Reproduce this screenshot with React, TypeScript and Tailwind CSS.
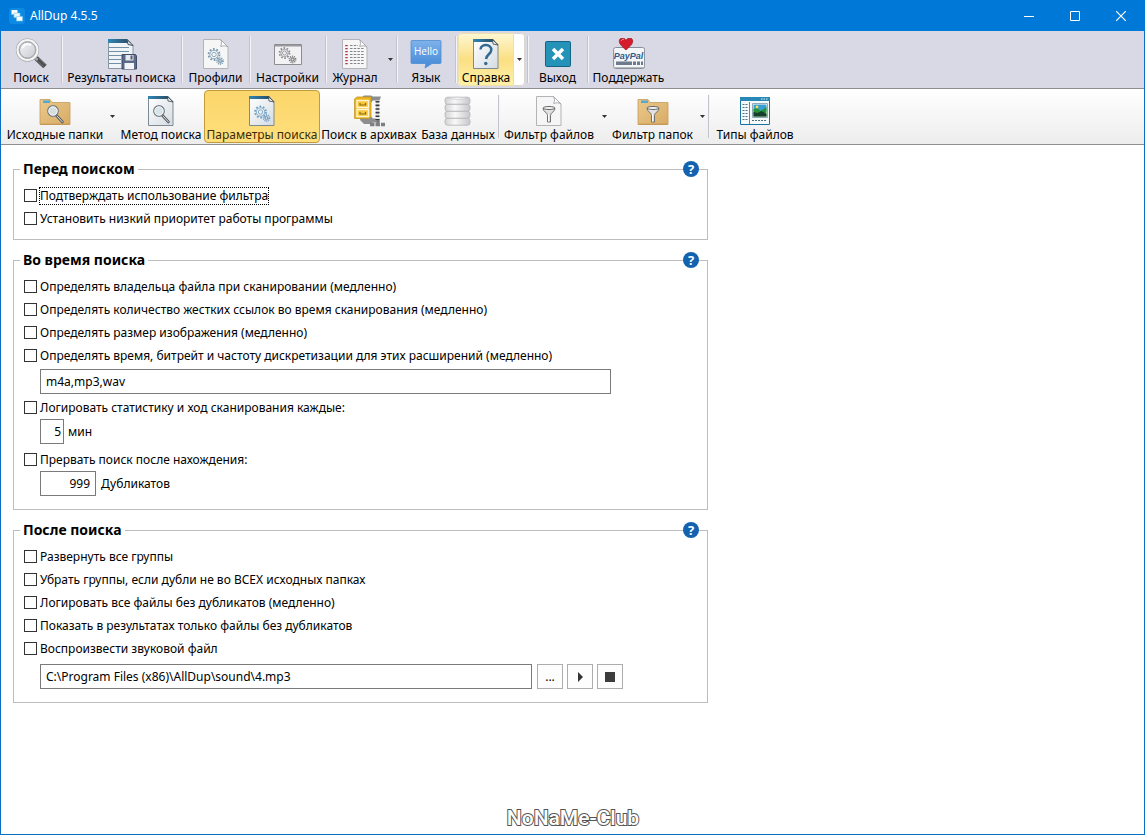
import type { ReactNode } from "react";

function Gear({ cx, cy, r, color }: { cx: number; cy: number; r: number; color: string }) {
  const tooth = (2 * Math.PI * r) / 20;
  return (
    <g fill="none" stroke={color}>
      <circle cx={cx} cy={cy} r={r} strokeWidth="1.800" strokeDasharray={`${tooth} ${tooth}`} />
      <circle cx={cx} cy={cy} r={r - 1.3} strokeWidth="0.8" />
      <circle cx={cx} cy={cy} r={r * 0.4} strokeWidth="0.8" />
    </g>
  );
}

function Svg({ children }: { children: ReactNode }) {
  return <svg viewBox="0 0 32 32" className="h-8 w-8 shrink-0" aria-hidden="true">{children}</svg>;
}

// page with a folded corner, the dark one has a blue header strip
function Page({ dark }: { dark?: boolean }) {
  return dark ? (
    <>
      <path d="M3.5 1.5H23l5 5v24H3.5z" fill="url(#pageFill)" stroke="#7c8a94" />
      <path d="M3 1h20l2 3H3z" fill="url(#stripFill)" />
      <path d="M22.500 1.500l5.500 5.500-5-1z" fill="#e8edf0" stroke="#39444c" strokeWidth="0.8" />
    </>
  ) : (
    <>
      <path d="M3.500 1.500H20.500l7.500 7.500v21.500H3.500z" fill="#f6f6f7" stroke="#b3b3b8" />
      <path d="M20.500 1.500c1.500 2.500 1 5 .2 7 2.500-1 5-1 7.300.5z" fill="#fff" stroke="#a2a2a8" strokeWidth="0.9" />
    </>
  );
}

function Folder() {
  return (
    <>
      <path d="M1 4.500h10l2 3h18v22H1z" fill="url(#folderFill)" stroke="#c69d5c" strokeWidth="0.8" />
      <path d="M4 5.500h7v2.500H4z" fill="#53a9d0" />
      <path d="M1.500 29.200h29" stroke="#c1934e" />
    </>
  );
}

function SmallLens() {
  return (
    <>
      <path d="M17.500 20.500l6 6.500" stroke="#555a60" strokeWidth="2.600" strokeLinecap="round" />
      <path d="M18 21l5.500 6" stroke="#e5e5e5" strokeWidth="1" strokeLinecap="round" />
      <circle cx="14" cy="16" r="5.200" fill="#d4e2e8" fillOpacity="0.9" stroke="#777f86" strokeWidth="1.500" />
      <circle cx="14" cy="16" r="4.200" fill="none" stroke="#f5f8fa" />
    </>
  );
}

function Funnel() {
  return (
    <>
      <path d="M10 13.500c0 3 4.500 4 4.500 7v6.500h3v-6.500c0-3 4.500-4 4.500-7z" fill="#e1e1e1" stroke="#6f6f70" />
      <ellipse cx="16" cy="13" rx="6" ry="1.500" fill="#f5f5f5" stroke="#666" />
      <path d="M15.500 19v7.500" stroke="#fff" />
    </>
  );
}

const icons: Record<string, ReactNode> = {
  search: (
    <>
      <path d="M21 20l9 8.500" stroke="#4a4a4c" strokeWidth="5" />
      <path d="M22 22.500l7 6.800M23.500 20l7 6.800" stroke="#858588" strokeWidth="0.8" />
      <path d="M18.500 18l4 4" stroke="#aaa" strokeWidth="2.500" />
      <circle cx="12.500" cy="12" r="10" fill="#d9dbe0" stroke="#98989d" strokeWidth="3.200" />
      <circle cx="12.500" cy="12" r="10" fill="none" stroke="#f6f6f6" strokeWidth="2.200" />
      <circle cx="12.500" cy="12" r="8" fill="url(#lensFill)" stroke="#a2a2a8" />
      <path d="M7.500 10c1-3.500 5-5 8.500-3" fill="none" stroke="#fff" strokeWidth="1.600" />
    </>
  ),
  results: (
    <>
      <path d="M2.500 1.500H21l6 6v23H2.500z" fill="#f0f4f7" stroke="#8697a3" />
      <path d="M2 1h19l4 4H2z" fill="url(#stripFill)" />
      <path d="M21 1.500l6 6-5-1z" fill="#e6eaed" stroke="#40505c" />
      <path d="M3 9.500h20M3 13.500h20M3 17.500h13M3 21.500h12M3 25.500h12" stroke="#6f90a6" />
      <path d="M16 16.500h13.500l1 1.500v13H16z" fill="#5b6a88" stroke="#404c68" />
      <path d="M19.500 17h8v5.500h-8z" fill="#e5e9f0" />
      <path d="M24.500 17.500h2v4h-2z" fill="#555d76" />
      <path d="M18.500 25h9.500v6h-9.500z" fill="#f3f5f8" />
    </>
  ),
  profiles: (
    <>
      <Page />
      <Gear cx={14} cy={16.5} r={5.500} color="#7898af" />
      <Gear cx={20} cy={23} r={3} color="#7898af" />
    </>
  ),
  settings: (
    <>
      <path d="M2.500 6.500h27v20h-27z" fill="#f2f2f4" stroke="#8c8c91" />
      <path d="M3 7h26v1.500H3z" fill="#9a9a9f" />
      <Gear cx={12.5} cy={15} r={5} color="#8d8d92" />
      <Gear cx={20.5} cy={21.5} r={3} color="#75757a" />
    </>
  ),
  log: (
    <>
      <Page />
      <path d="M11 7.500h8M11 10.500h14M11 13.500h14M11 16.500h14M11 19.500h14M11 22.500h14M11 25.500h14" stroke="#86868a" strokeWidth="1.200" strokeDasharray="2.500 1.200" />
      <path d="M7.500 7v19.500" stroke="#b5384a" strokeWidth="2.500" strokeDasharray="1.300 1.700" />
    </>
  ),
  language: (
    <>
      <path d="M2 2.500h28q1 0 1 1v21q0 1-1 1H22l-7 4.500 1-4.500H2q-1 0-1-1v-21q0-1 1-1z" fill="url(#bubbleFill)" stroke="#4d8dd2" strokeWidth="0.8" />
      <text x="16" y="17" textAnchor="middle" fontFamily="Open Sans, sans-serif" fontSize="10" fill="#fff">Hello</text>
    </>
  ),
  help: (
    <>
      <Page dark />
      <path d="M10.500 11.500c.5-6 11-6 10.800.5-.2 4-4.800 4.500-5.300 9" fill="none" stroke="#326a91" strokeWidth="2.500" />
      <circle cx="15.800" cy="25.500" r="1.700" fill="#326a91" />
    </>
  ),
  exit: (
    <>
      <rect x="3.500" y="3.500" width="25" height="25" rx="1" fill="#2593b8" stroke="#126487" />
      <path d="M11 11l10 10M21 11L11 21" stroke="#fff" strokeWidth="3.500" />
    </>
  ),
  donate: (
    <>
      <rect x="0.600" y="9.500" width="31" height="21" rx="2" fill="#f4f5f7" stroke="#888f99" />
      <text x="15.500" y="21" textAnchor="middle" fontFamily="Liberation Sans, sans-serif" fontSize="9" fontWeight="700" fontStyle="italic" fill="#315b8c">PayPal</text>
      <path d="M3 23.500h16v3.500H3zM20 23.500h3v3.500h-3zM24 23.500h3v3.500h-3zM28 23.500h2v3.500h-2z" fill="#6d7b8d" />
      <path d="M1 29.500h30" stroke="#b5b9c0" />
      <path d="M13 12C9 8.500 6.300 6 6.300 3.300c0-4 5-4.300 6.700-.8 1.700-3.500 6.700-3.200 6.700.8 0 2.700-2.700 5.200-6.700 8.700z" fill="#d61c2b" stroke="#96222b" strokeWidth="0.8" />
      <path d="M8.200 3c.3-1.500 1.500-2 2.700-1.500" fill="none" stroke="#f18c92" />
    </>
  ),
  folderSearch: <><Folder /><SmallLens /></>,
  method: <><Page dark /><SmallLens /></>,
  options: (
    <>
      <Page dark />
      <Gear cx={14.5} cy={17} r={5.500} color="#6f9fc7" />
      <Gear cx={20.5} cy={23} r={3} color="#6f9fc7" />
    </>
  ),
  archive: (
    <>
      <path d="M8 3l3-2.500h7l2 1h8l-1.500 4H20L17.500 8v13l2.500 2.500h6.500v4H20l-2 1.500h-7l-4-4z" fill="#8b8d90" />
      <path d="M24.500 6v19" stroke="#e4e4e4" strokeWidth="3" />
      <path d="M24.500 6v19" stroke="#34373a" strokeWidth="4" strokeDasharray="1.600 2" />
      <path d="M25 25v4" stroke="#777" strokeWidth="3" />
      <path d="M17 29.500h15" stroke="#7d8083" strokeWidth="3.500" strokeDasharray="4.500 1" />
      <path d="M1.500 4l2.500-2H18v19.500l-2 2H1.500z" fill="#eeb51b" stroke="#c2972b" strokeWidth="0.8" />
      <path d="M4 5.500h11.500v7H4zM4 14.500h11.500v7H4z" fill="#f7c63b" stroke="#fff5cf" strokeWidth="1.400" />
      <path d="M7 8v2h5.500V8M7 17v2h5.500v-2" fill="none" stroke="#8b6b1a" strokeWidth="1.200" />
    </>
  ),
  database: (
    <>
      {[23.2, 16.2, 9.2, 2.2].map((y) => (
        <rect key={y} x="3" y={y} width="25" height="7" rx="2.500" fill="url(#diskFill)" stroke="#b3b3b7" strokeWidth="0.8" />
      ))}
      <path d="M5 3.500q11-2.500 21 0-10 2-21 0z" fill="#f6f6f7" stroke="#c2c2c6" strokeWidth="0.600" />
    </>
  ),
  fileFilter: <><Page /><Funnel /></>,
  folderFilter: <><Folder /><Funnel /></>,
  fileTypes: (
    <>
      <path d="M1.500 2.500h29v27h-29z" fill="#f5fafc" stroke="#1774a2" />
      <path d="M1 2h30v4H1z" fill="#2788b6" />
      <path d="M22 4h7" stroke="#d9f1fa" strokeDasharray="1.500 1" />
      <path d="M10.500 7v22" stroke="#3a91ba" />
      <path d="M3.500 9.500h6M3.500 12.500h6M3.500 15.500h6M3.500 18.500h6M3.500 21.500h6M3.500 24.500h6M13 25.500h15" stroke="#477080" strokeDasharray="2 1" />
      <path d="M13.500 8.500h15v14h-15z" fill="#fff" stroke="#8fa9b3" />
      <path d="M14.500 9.500h13v7h-13z" fill="#399ed2" />
      <path d="M14.500 14l4-1 3 3 6-4v9.500h-13z" fill="#269337" />
      <path d="M14.500 17l4 1 4-2 5 3v2.500h-13z" fill="#153f2b" />
      <circle cx="18" cy="12" r="1.400" fill="#f6df4e" />
    </>
  ),
};

type Tool = { icon: string; label: string; width: string; menu?: string; sep?: boolean; state?: "hover" | "active" };

const mainTools: Tool[] = [
  { icon: "search", label: "Поиск", width: "w-[60px]", sep: true },
  { icon: "results", label: "Результаты поиска", width: "w-[119px]", sep: true },
  { icon: "profiles", label: "Профили", width: "w-[67px]", sep: true },
  { icon: "settings", label: "Настройки", width: "w-[75px]", sep: true },
  { icon: "log", label: "Журнал", width: "w-[58px]", menu: "w-[12px]", sep: true },
  { icon: "language", label: "Язык", width: "w-[58px]", sep: true },
  { icon: "help", label: "Справка", width: "w-[56px]", menu: "w-[11px]", sep: true, state: "hover" },
  { icon: "exit", label: "Выход", width: "w-[59px]", sep: true },
  { icon: "donate", label: "Поддержать", width: "w-[81px]" },
];

const searchTools: Tool[] = [
  { icon: "folderSearch", label: "Исходные папки", width: "w-[102px]", menu: "w-[12px]" },
  { icon: "method", label: "Метод поиска", width: "w-[86px]" },
  { icon: "options", label: "Параметры поиска", width: "w-[116px]", state: "active" },
  { icon: "archive", label: "Поиск в архивах", width: "w-[98px]" },
  { icon: "database", label: "База данных", width: "w-[80px]", sep: true },
  { icon: "fileFilter", label: "Фильтр файлов", width: "w-[100px]", menu: "w-[10px]" },
  { icon: "folderFilter", label: "Фильтр папок", width: "w-[87px]", menu: "w-[12px]", sep: true },
  { icon: "fileTypes", label: "Типы файлов", width: "w-[92px]" },
];

const toolStates = {
  hover: "rounded-l-sm border border-[#efdfa8] bg-linear-to-b from-[#fdf6cf] via-[#fbdf83] to-[#fdf1a8]",
  active: "rounded-sm border border-[#c29b3d] bg-linear-to-b from-[#fbd66b] to-[#ffdf7c] text-[#3b2c08]",
};

function ToolButton({ tool }: { tool: Tool }) {
  const hover = tool.state === "hover";
  return (
    <>
      <div className={`flex shrink-0 ${hover ? "mx-[2px] my-[2px] rounded-sm bg-white" : ""}`}>
        <button className={`flex flex-col items-center justify-center pt-1 whitespace-nowrap text-[12px] leading-4 ${tool.width} ${tool.state ? toolStates[tool.state] : ""}`}>
          <Svg>{icons[tool.icon]}</Svg>
          <span>{tool.label}</span>
        </button>
        {tool.menu && (
          <button aria-label={`${tool.label}: меню`} className={`flex items-center justify-center ${tool.menu} ${hover ? "rounded-r-sm border border-l-0 border-[#d9d6cf]" : ""}`}>
            <svg viewBox="0 0 5 3" className="h-[3px] w-[5px]"><path d="M0 0h5L2.500 3z" fill="#333" /></svg>
          </button>
        )}
      </div>
      {tool.sep && <div className="my-[5px] w-px shrink-0 bg-[#c3c3cc] shadow-[1px_0_0_#f4f4f8]" />}
    </>
  );
}

function Group({ title, children }: { title: string; children: ReactNode }) {
  return (
    <section className="relative">
      <fieldset className="min-w-0 border border-[#bdbdbd] pt-[5px] pr-3 pb-[9px] pl-[10px]">
        <legend className="-ml-1 px-[3px] text-[14px] leading-5 font-bold">{title}</legend>
        {children}
      </fieldset>
      <button aria-label={`Справка: ${title}`} className="absolute top-0.5 right-[9px] flex h-4 w-4 items-center justify-center rounded-full bg-[#1262b0] text-[13px] leading-4 font-bold text-white">?</button>
    </section>
  );
}

function Check({ label, focused }: { label: string; focused?: boolean }) {
  return (
    <label className="flex h-[23px] items-center gap-[3px]">
      <input type="checkbox" className="h-[13px] w-[13px] shrink-0 appearance-none border border-[#333] bg-white checked:bg-[#333]" />
      <span className={focused ? "leading-4 outline-1 outline-black outline-dotted" : "leading-4"}>{label}</span>
    </label>
  );
}

const field = "h-[25px] border border-[#7a7a7a] bg-white px-[5px] outline-none";
const playerButton = "flex h-[25px] w-[26px] shrink-0 items-center justify-center border border-[#adadad] bg-[#fdfdfd]";

export default function App() {
  return (
    <div className="flex min-h-screen flex-col border-x border-b border-[#0a6fc2] bg-white font-['Noto_Sans','Open_Sans',sans-serif] text-[12px] text-black">
      <svg className="absolute h-0 w-0" aria-hidden="true">
        <defs>
          <linearGradient id="pageFill" x1="0" y1="0" x2="1" y2="1"><stop stopColor="#fff" /><stop offset="1" stopColor="#d4dce2" /></linearGradient>
          <linearGradient id="stripFill"><stop stopColor="#2f86b5" /><stop offset="1" stopColor="#2a4a60" /></linearGradient>
          <linearGradient id="folderFill" x1="0" y1="0" x2="1" y2="1"><stop stopColor="#ebc98c" /><stop offset="1" stopColor="#d8ab65" /></linearGradient>
          <linearGradient id="lensFill" x1="0" y1="0" x2="1" y2="1"><stop stopColor="#f4f5f8" /><stop offset="1" stopColor="#c9cbd2" /></linearGradient>
          <linearGradient id="bubbleFill" x1="0" y1="0" x2="0" y2="1"><stop stopColor="#7fb2ea" /><stop offset="1" stopColor="#4388d7" /></linearGradient>
          <linearGradient id="diskFill"><stop stopColor="#d3d3d5" /><stop offset="0.4" stopColor="#f8f8f8" /><stop offset="1" stopColor="#c8c8cc" /></linearGradient>
        </defs>
      </svg>

      <header className="-mx-px flex h-[31px] items-center bg-[#0078d7] text-white">
        <svg viewBox="0 0 16 16" className="ml-[9px] h-4 w-4" aria-hidden="true">
          <rect width="16" height="16" rx="3" fill="#0d8be2" />
          <path d="M2.500 2h6v4.500h-6z" fill="#fff" />
          <path d="M5 5h6v4.500H5z" fill="#e9f7ff" stroke="#7cc5f2" strokeWidth="0.600" />
          <path d="M7.500 8.500h6V13h-6z" fill="#fff" stroke="#7cc5f2" strokeWidth="0.600" />
        </svg>
        <h1 className="ml-[5px] flex-1">AllDup 4.5.5</h1>
        <button aria-label="Свернуть" className="flex h-full w-[46px] items-center justify-center"><svg viewBox="0 0 10 10" className="h-[10px] w-[10px]"><path d="M0 5.500h10" stroke="#fff" /></svg></button>
        <button aria-label="Развернуть" className="flex h-full w-[45px] items-center justify-center"><svg viewBox="0 0 10 10" className="h-[10px] w-[10px]"><path d="M.5.5h9v9h-9z" fill="none" stroke="#fff" /></svg></button>
        <button aria-label="Закрыть" className="flex h-full w-12 items-center justify-center"><svg viewBox="0 0 10 10" className="h-[10px] w-[10px]"><path d="M0 0l10 10M10 0L0 10" stroke="#fff" strokeWidth="1.200" /></svg></button>
      </header>

      <nav className="flex h-[58px] border-b border-[#8d8d92] bg-[#d9d8e5]">
        {mainTools.map((tool) => <ToolButton key={tool.icon} tool={tool} />)}
      </nav>
      <nav className="flex h-[56px] border-b border-[#8f8f8f] bg-linear-to-b from-white to-[#ededee] pt-px pb-px pl-[3px]">
        {searchTools.map((tool) => <ToolButton key={tool.icon} tool={tool} />)}
      </nav>

      <main className="flex w-full max-w-[719px] flex-col gap-[10px] px-3 pt-[14px]">
        <Group title="Перед поиском">
          <Check label="Подтверждать использование фильтра" focused />
          <Check label="Установить низкий приоритет работы программы" />
        </Group>

        <Group title="Во время поиска">
          <Check label="Определять владельца файла при сканировании (медленно)" />
          <Check label="Определять количество жестких ссылок во время сканирования (медленно)" />
          <Check label="Определять размер изображения (медленно)" />
          <Check label="Определять время, битрейт и частоту дискретизации для этих расширений (медленно)" />
          <div className="mt-0.5 mb-0.5 flex pl-4">
            <input aria-label="Расширения файлов" defaultValue="m4a,mp3,wav" className={`w-full max-w-[571px] ${field}`} />
          </div>
          <Check label="Логировать статистику и ход сканирования каждые:" />
          <label className="mb-1 flex items-center gap-1 pl-4">
            <input defaultValue="5" className="h-[25px] w-6 border border-[#7a7a7a] bg-white px-0.5 text-right outline-none" />
            мин
          </label>
          <Check label="Прервать поиск после нахождения:" />
          <label className="mb-1 flex items-center gap-[5px] pl-4">
            <input defaultValue="999" className={`w-14 text-right ${field}`} />
            Дубликатов
          </label>
        </Group>

        <Group title="После поиска">
          <Check label="Развернуть все группы" />
          <Check label="Убрать группы, если дубли не во ВСЕХ исходных папках" />
          <Check label="Логировать все файлы без дубликатов (медленно)" />
          <Check label="Показать в результатах только файлы без дубликатов" />
          <Check label="Воспроизвести звуковой файл" />
          <div className="my-1 flex gap-1 pl-4">
            <input aria-label="Звуковой файл" defaultValue="C:\Program Files (x86)\AllDup\sound\4.mp3" className={`mr-px w-full max-w-[492px] min-w-0 ${field}`} />
            <button aria-label="Обзор" className={playerButton}>...</button>
            <button aria-label="Воспроизвести" className={playerButton}><svg viewBox="0 0 10 10" className="h-[10px] w-[10px]"><path d="M3 0l5 5-5 5z" fill="#333" /></svg></button>
            <button aria-label="Остановить" className={playerButton}><svg viewBox="0 0 10 10" className="h-[10px] w-[10px]"><path d="M0 0h10v10H0z" fill="#3c3c3c" /></svg></button>
          </div>
        </Group>
      </main>

      <footer className="mt-auto flex justify-center pt-6 pb-1">
        <svg viewBox="0 0 150 26" className="h-[26px] w-[150px]">
          <text x="75" y="21" textAnchor="middle" fontFamily="Roboto, sans-serif" fontSize="21" fontWeight="500" fill="#fff" stroke="#555" strokeWidth="2" paintOrder="stroke">NoNaMe-Club</text>
        </svg>
      </footer>
    </div>
  );
}
